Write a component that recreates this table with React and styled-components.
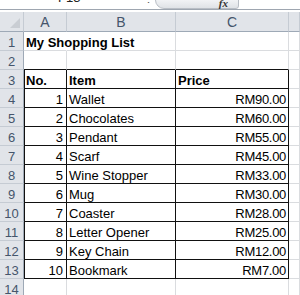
import React from "react";
import styled, { createGlobalStyle } from "styled-components";

const items = [
  ["Wallet", "RM90.00"],
  ["Chocolates", "RM60.00"],
  ["Pendant", "RM55.00"],
  ["Scarf", "RM45.00"],
  ["Wine Stopper", "RM33.00"],
  ["Mug", "RM30.00"],
  ["Coaster", "RM28.00"],
  ["Letter Opener", "RM25.00"],
  ["Key Chain", "RM12.00"],
  ["Bookmark", "RM7.00"],
];

const GlobalStyle = createGlobalStyle`
  html, body {
    margin: 0;
    padding: 0;
    background: #fff;
    overflow: hidden;
  }
  body {
    font-family: "Liberation Sans", Arial, sans-serif;
  }
`;

const App = () => {
  return (
    <Wrapper>
      <GlobalStyle />
      <FormulaStrip>
        <NameBox>F13</NameBox>
        <Dots>⋮</Dots>
        <FxButton>
          <Fx>fx</Fx>
        </FxButton>
      </FormulaStrip>
      <Gap />
      <Sheet>
        <Corner>
          <CornerMark />
        </Corner>
        <ColHead>A</ColHead>
        <ColHead>B</ColHead>
        <ColHead>C</ColHead>
        <ColHead />

        <RowHead>1</RowHead>
        <Cell $bold $noRight>My Shopping List</Cell>
        <Cell />
        <Cell />
        <Cell />

        <RowHead>2</RowHead>
        <Cell $under />
        <Cell $under />
        <Cell $under />
        <Cell />

        <RowHead>3</RowHead>
        <Cell $boxed $first $bold>No.</Cell>
        <Cell $boxed $bold>Item</Cell>
        <Cell $boxed $bold>Price</Cell>
        <Cell />

        {items.map(([name, price], i) => (
          <React.Fragment key={name}>
            <RowHead>{i + 4}</RowHead>
            <Cell $boxed $first $right>
              {i + 1}
            </Cell>
            <Cell $boxed>{name}</Cell>
            <Cell $boxed $right $price>
              {price}
            </Cell>
            <Cell />
          </React.Fragment>
        ))}

        <RowHead>14</RowHead>
        <Cell />
        <Cell />
        <Cell />
        <Cell />
      </Sheet>
    </Wrapper>
  );
};

const Wrapper = styled.div`
  width: 300px;
  height: 295px;
  overflow: hidden;
  background: #fff;
`;

const FormulaStrip = styled.div`
  position: relative;
  height: 9px;
  border-bottom: 1px solid #9ea6b0;
  overflow: hidden;
`;

const NameBox = styled.div`
  position: absolute;
  left: 58px;
  bottom: 5px;
  font-size: 13px;
  line-height: 13px;
  color: #222;
`;

const Dots = styled.div`
  position: absolute;
  left: 143px;
  bottom: 4px;
  font-size: 11px;
  line-height: 11px;
  color: #555;
`;

const FxButton = styled.div`
  position: absolute;
  left: 155px;
  top: -2px;
  width: 82px;
  height: 9px;
  border: 1px solid #b9bec5;
  border-radius: 0 0 3px 9px;
  background: linear-gradient(#f4f5f7, #dfe2e6);
`;

const Fx = styled.span`
  position: absolute;
  right: 10px;
  bottom: 1px;
  font-family: "Liberation Serif", serif;
  font-style: italic;
  font-weight: bold;
  font-size: 11px;
  line-height: 8px;
  color: #333;
`;

const Gap = styled.div`
  height: 2px;
`;

const Sheet = styled.div`
  display: grid;
  grid-template-columns: 24px 43px 109px 113px 11px;
  grid-template-rows: 20px;
  grid-auto-rows: 19px;
`;

const Corner = styled.div`
  position: relative;
  box-sizing: border-box;
  background: #e1e4e9;
  border-right: 1px solid #c5cbd3;
  border-bottom: 1px solid #9ea9b6;
`;

const CornerMark = styled.div`
  position: absolute;
  right: 3px;
  bottom: 3px;
  width: 0;
  height: 0;
  border-left: 10px solid transparent;
  border-bottom: 10px solid #c9cdd3;
`;

const ColHead = styled.div`
  box-sizing: border-box;
  display: flex;
  align-items: center;
  justify-content: center;
  padding-top: 1px;
  background: #e1e4e9;
  border-right: 1px solid #c5cbd3;
  border-bottom: 1px solid #9ea9b6;
  font-size: 14px;
  color: #45556b;
`;

const RowHead = styled.div`
  box-sizing: border-box;
  display: flex;
  align-items: center;
  justify-content: center;
  padding-top: 2px;
  background: #e1e4e9;
  border-right: 1px solid #9ea9b6;
  border-bottom: 1px solid #c5cbd3;
  font-size: 13px;
  color: #45556b;
`;

const Cell = styled.div`
  box-sizing: border-box;
  display: flex;
  align-items: center;
  justify-content: ${(p) => (p.$right ? "flex-end" : "flex-start")};
  padding: 2px ${(p) => (p.$price ? "2px" : p.$right ? "3px" : "0")} 0
    ${(p) => (p.$right ? "0" : "2px")};
  border-right: 1px solid
    ${(p) => (p.$boxed ? "#111" : p.$noRight ? "transparent" : "#dadcdf")};
  border-bottom: 1px solid
    ${(p) => (p.$boxed || p.$under ? "#111" : "#dadcdf")};
  box-shadow: ${(p) => (p.$first ? "inset 1px 0 0 #111" : "none")};
  font-size: 13px;
  font-weight: ${(p) => (p.$bold ? "bold" : "normal")};
  letter-spacing: ${(p) => (p.$price ? "-0.3px" : "0")};
  color: #000;
  white-space: nowrap;
  overflow: visible;
`;

export default App;
